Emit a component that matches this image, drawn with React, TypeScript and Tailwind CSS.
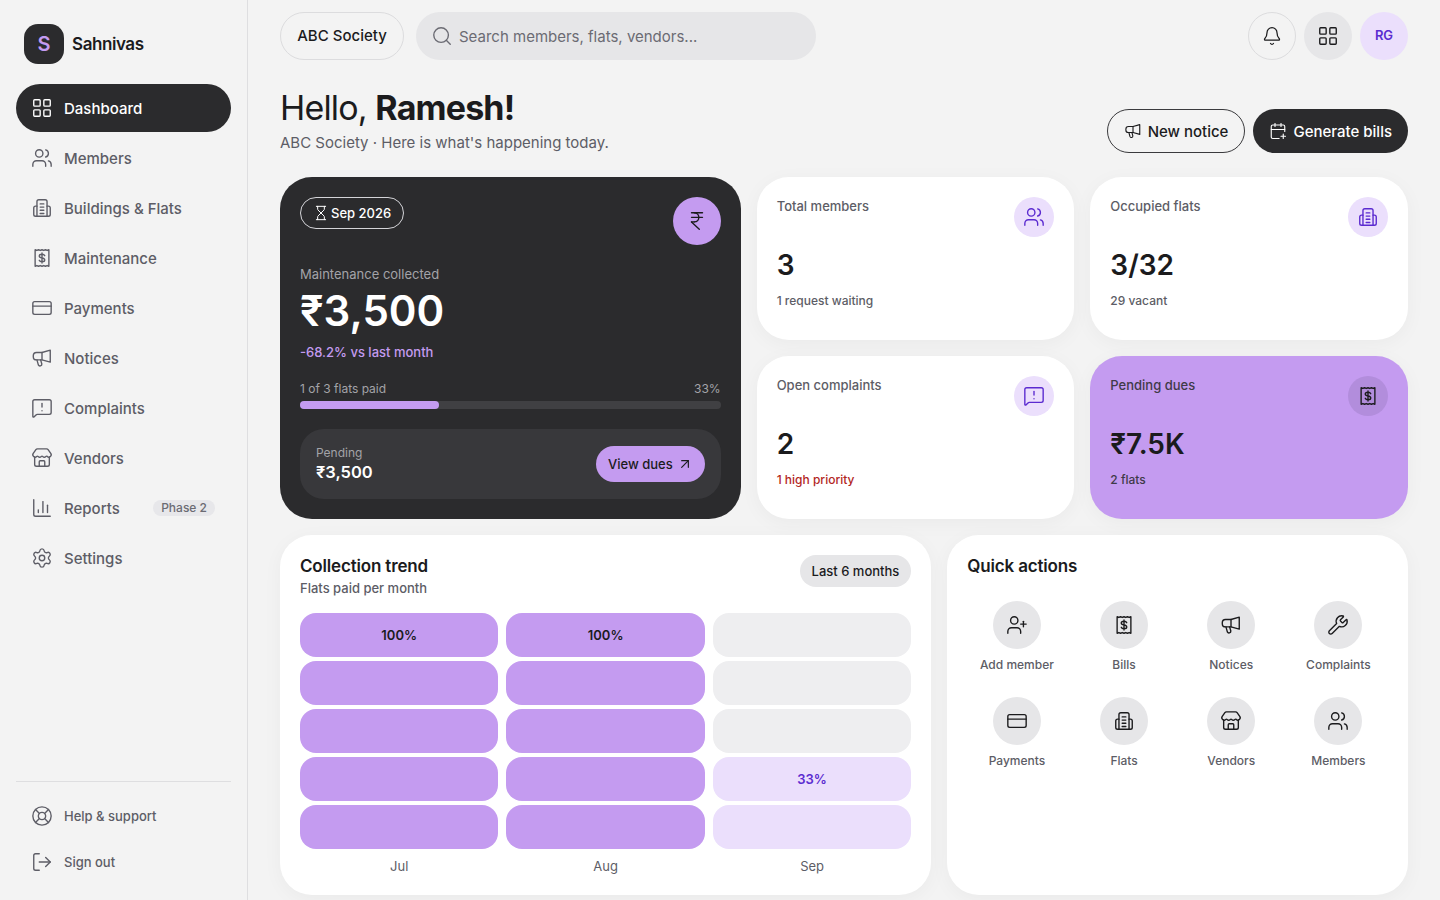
import React from "react";
import { ArrowUpRight, Bell, CalendarPlus, ChartColumn, CreditCard, Hourglass, IndianRupee, LayoutGrid, LifeBuoy, LogOut, MessageSquareWarning, Search, Settings, Store, UserPlus, Users, Wrench } from "lucide-react";

type IP = { size?: number; strokeWidth?: number; className?: string };

const Receipt = ({ size = 22, strokeWidth = 1.5, className }: IP) => (
  <svg width={size} height={size} viewBox="0 0 24 24" fill="none" stroke="currentColor" strokeWidth={strokeWidth} strokeLinecap="round" strokeLinejoin="round" className={className}>
    <path d="M4.5 3v18l1.875-.8 1.875.8 1.875-.8L12 21l1.875-.8 1.875.8 1.875-.8 1.875.8V3l-1.875.8L15.75 3l-1.875.8L12 3l-1.875.8L8.25 3l-1.875.8z" />
    <path d="M15 9.500c-.4-1-1.500-1.600-3-1.600-1.700 0-3 .8-3 2s1.100 1.800 3 2.100 3 .9 3 2.100-1.300 2-3 2c-1.500 0-2.600-.6-3-1.600M12 6.500v11" />
  </svg>
);
const Flats = ({ size = 22, strokeWidth = 1.5, className }: IP) => (
  <svg width={size} height={size} viewBox="0 0 24 24" fill="none" stroke="currentColor" strokeWidth={strokeWidth} strokeLinecap="round" strokeLinejoin="round" className={className}>
    <path d="M6.500 21V5a2 2 0 0 1 2-2h7a2 2 0 0 1 2 2v16" />
    <path d="M6.500 10H5a2 2 0 0 0-2 2v7a2 2 0 0 0 2 2h14a2 2 0 0 0 2-2v-7a2 2 0 0 0-2-2h-1.500" />
    <path d="M10 7.500h4M10 11h4M10 14.500h4M10 18h4" />
  </svg>
);
const Horn = ({ size = 22, strokeWidth = 1.5, className }: IP) => (
  <svg width={size} height={size} viewBox="0 0 24 24" fill="none" stroke="currentColor" strokeWidth={strokeWidth} strokeLinecap="round" strokeLinejoin="round" className={className}>
    <path d="M21 3.500v13L12 14H6a3.500 3.500 0 0 1-3.500-3.500V9.500A3.500 3.500 0 0 1 6 6h6z" />
    <path d="M12 6v8" />
    <path d="M6.500 14 8 19.500a2 2 0 0 0 3.800-1L10.500 14" />
  </svg>
);

const nav = [
  { label: "Members", Icon: Users },
  { label: "Buildings & Flats", Icon: Flats },
  { label: "Maintenance", Icon: Receipt },
  { label: "Payments", Icon: CreditCard },
  { label: "Notices", Icon: Horn },
  { label: "Complaints", Icon: MessageSquareWarning },
  { label: "Vendors", Icon: Store },
  { label: "Reports", Icon: ChartColumn, badge: "Phase 2" },
  { label: "Settings", Icon: Settings },
];

const quick = [
  { label: "Add member", Icon: UserPlus },
  { label: "Bills", Icon: Receipt },
  { label: "Notices", Icon: Horn },
  { label: "Complaints", Icon: Wrench },
  { label: "Payments", Icon: CreditCard },
  { label: "Flats", Icon: Flats },
  { label: "Vendors", Icon: Store },
  { label: "Members", Icon: Users },
];

function Sidebar() {
  return (
    <aside className="flex h-full w-[248px] shrink-0 flex-col border-r border-[#dedee0] px-4 pb-4 pt-6">
      <div className="flex items-center gap-2 pl-2">
        <div className="flex h-10 w-10 items-center justify-center rounded-[14px] bg-[#2b2b2d] text-xl font-semibold text-[#c49bf0]">S</div>
        <span className="pt-0.5 text-[17px] font-semibold tracking-tight text-[#1b1b1d]">Sahnivas</span>
      </div>
      <nav className="mt-5 flex flex-col gap-0.5">
        <div className="flex h-12 items-center gap-[11px] rounded-full bg-[#2b2b2d] px-[15px] text-[15px] font-medium text-white">
          <LayoutGrid size={22} strokeWidth={1.5} />
          <span className="pt-0.5">Dashboard</span>
        </div>
        {nav.map(({ label, Icon, badge }) => (
          <div key={label} className="flex h-12 items-center gap-[11px] px-[15px] text-[15px] font-medium text-[#5d5d66]">
            <Icon size={22} strokeWidth={1.5} />
            <span className="pt-0.5">{label}</span>
            {badge && <span className="ml-auto mr-px rounded-full bg-[#e7e7ea] px-2 text-xs leading-4 text-[#6b6b73]">{badge}</span>}
          </div>
        ))}
      </nav>
      <div className="mt-auto flex flex-col gap-0.5 border-t border-[#dedee0] pt-3">
        {[
          { label: "Help & support", Icon: LifeBuoy },
          { label: "Sign out", Icon: LogOut },
        ].map(({ label, Icon }) => (
          <div key={label} className="flex h-11 items-center gap-[11px] px-[15px] text-[13px] font-medium text-[#5d5d66]">
            <Icon size={22} strokeWidth={1.5} />
            <span className="pt-0.5">{label}</span>
          </div>
        ))}
      </div>
    </aside>
  );
}

function Topbar() {
  return (
    <header className="flex h-12 items-center gap-3">
      <div className="flex h-12 w-[124px] items-center justify-center rounded-full border border-[#dcdcde] text-[15px] font-medium text-[#1b1b1d]">ABC Society</div>
      <div className="flex h-12 w-[400px] items-center gap-1.5 rounded-full bg-[#e6e6e8] px-[15px] text-[15px] text-[#6b6b73]">
        <Search size={22} strokeWidth={1.5} />
        <span className="pt-0.5">Search members, flats, vendors...</span>
      </div>
      <div className="ml-auto flex items-center gap-2">
        <div className="flex h-12 w-12 items-center justify-center rounded-full border border-[#dcdcde] text-[#1b1b1d]"><Bell size={20} strokeWidth={1.5} /></div>
        <div className="flex h-12 w-12 items-center justify-center rounded-full bg-[#e6e6e8] text-[#1b1b1d]"><LayoutGrid size={22} strokeWidth={1.5} /></div>
        <div className="flex h-12 w-12 items-center justify-center rounded-full bg-[#ebdffc] text-[13px] font-semibold text-[#5b2bd0]">RG</div>
      </div>
    </header>
  );
}

function Hero() {
  return (
    <div className="col-span-5 flex h-[342px] flex-col rounded-[32px] bg-[#2b2b2d] p-5 text-white">
      <div className="flex items-start justify-between">
        <div className="flex h-8 items-center gap-[2px] rounded-full border border-[#d4d4d8] px-3 text-[13px] font-medium">
          <Hourglass size={16} strokeWidth={1.5} />
          <span className="pt-0.5">Sep 2026</span>
        </div>
        <div className="flex h-12 w-12 items-center justify-center rounded-full bg-[#c49bf0] text-[#1b1b1d]"><IndianRupee size={22} strokeWidth={1.5} /></div>
      </div>
      <div className="mt-[19px] text-[13px] leading-5 text-[#a3a3a8]">Maintenance collected</div>
      <div className="mt-[3px] text-[42px] font-semibold leading-[48px]">₹3,500</div>
      <div className="mt-[7px] text-[13px] font-medium leading-5 text-[#c49bf0]">-68.2% vs last month</div>
      <div className="mt-[17px] flex justify-between text-xs leading-5 text-[#a3a3a8]">
        <span>1 of 3 flats paid</span>
        <span>33%</span>
      </div>
      <div className="mt-[2px] h-2 rounded-full bg-[#404043]">
        <div className="h-2 w-[33%] rounded-full bg-[#c49bf0]" />
      </div>
      <div className="mt-5 flex h-[70px] items-center justify-between rounded-3xl bg-[#38383b] pl-4 pr-4">
        <div>
          <div className="text-xs leading-[17px] text-[#a3a3a8]">Pending</div>
          <div className="text-[16.5px] font-semibold leading-[23px]">₹3,500</div>
        </div>
        <div className="flex h-9 items-center gap-1 rounded-full bg-[#c49bf0] px-3 text-[13px] font-medium text-[#1b1b1d]">
          <span className="pt-0.5">View dues</span>
          <ArrowUpRight size={16} strokeWidth={1.75} />
        </div>
      </div>
    </div>
  );
}

function Stat({ label, value, sub, Icon, subClass, accent }: { label: string; value: string; sub: string; Icon: React.ComponentType<IP>; subClass?: string; accent?: boolean }) {
  return (
    <div className={accent ? "flex flex-col rounded-[32px] bg-[#c49bf0] p-5 shadow-[0_4px_20px_rgba(0,0,0,0.04)]" : "flex flex-col rounded-[32px] bg-white p-5 shadow-[0_4px_20px_rgba(0,0,0,0.04)]"}>
      <div className="flex items-start justify-between">
        <span className={accent ? "text-[13px] font-medium leading-[18px] text-[#3f3a48]" : "text-[13px] font-medium leading-[18px] text-[#5d5d66]"}>{label}</span>
        <div className={accent ? "flex h-10 w-10 items-center justify-center rounded-full bg-[#b28ddc] text-[#1b1b1d]" : "flex h-10 w-10 items-center justify-center rounded-full bg-[#ebdffc] text-[#5b2bd0]"}>
          <Icon size={22} strokeWidth={1.5} />
        </div>
      </div>
      <div className="mt-[10px] text-[28px] font-semibold leading-9 text-[#1b1b1d]">{value}</div>
      <div className={"mt-[9px] text-xs font-medium leading-[18px] " + (subClass ?? "text-[#5d5d66]")}>{sub}</div>
    </div>
  );
}

function Trend() {
  const cols = [
    { m: "Jul", cells: ["100%", "", "", "", ""], c: ["p", "p", "p", "p", "p"] },
    { m: "Aug", cells: ["100%", "", "", "", ""], c: ["p", "p", "p", "p", "p"] },
    { m: "Sep", cells: ["", "", "", "33%", ""], c: ["g", "g", "g", "l", "l"] },
  ];
  const cls: Record<string, string> = {
    p: "flex h-11 items-center justify-center rounded-2xl bg-[#c49bf0] pt-0.5 text-[13px] font-semibold text-[#1b1b1d]",
    g: "flex h-11 items-center justify-center rounded-2xl bg-[#eeeef0] pt-0.5 text-[13px] font-semibold",
    l: "flex h-11 items-center justify-center rounded-2xl bg-[#ebdffc] pt-0.5 text-[13px] font-semibold text-[#5b2bd0]",
  };
  return (
    <div className="col-span-7 flex h-[360px] flex-col rounded-[32px] bg-white p-5 shadow-[0_4px_20px_rgba(0,0,0,0.04)]">
      <div className="flex items-start justify-between">
        <div>
          <div className="text-[17px] font-semibold leading-[22px] tracking-[-0.01em] text-[#1b1b1d]">Collection trend</div>
          <div className="mt-[1px] text-[13px] font-medium leading-5 text-[#5d5d66]">Flats paid per month</div>
        </div>
        <div className="flex h-8 items-center rounded-full bg-[#e6e6e8] px-3 pt-0.5 text-[13px] font-medium text-[#1b1b1d]">Last 6 months</div>
      </div>
      <div className="mt-[15px] grid grid-cols-3 gap-x-2">
        {cols.map((col) => (
          <div key={col.m} className="flex flex-col gap-1">
            {col.cells.map((t, i) => (
              <div key={i} className={cls[col.c[i]]}>{t}</div>
            ))}
            <div className="mt-[3px] text-center text-[13px] leading-5 text-[#5d5d66]">{col.m}</div>
          </div>
        ))}
      </div>
    </div>
  );
}

function Quick() {
  return (
    <div className="col-span-5 flex h-[360px] flex-col rounded-[32px] bg-white p-5 shadow-[0_4px_20px_rgba(0,0,0,0.04)]">
      <div className="text-[17px] font-semibold leading-[22px] tracking-[-0.01em] text-[#1b1b1d]">Quick actions</div>
      <div className="mt-6 grid grid-cols-4 gap-x-2 gap-y-[23px]">
        {quick.map(({ label, Icon }) => (
          <div key={label} className="flex flex-col items-center">
            <div className="flex h-12 w-12 items-center justify-center rounded-full bg-[#e6e6e8] text-[#1b1b1d]">
              <Icon size={22} strokeWidth={1.5} />
            </div>
            <div className="mt-[7px] text-xs font-medium leading-[18px] text-[#5d5d66]">{label}</div>
          </div>
        ))}
      </div>
    </div>
  );
}

export default function App() {
  return (
    <div className="flex h-screen w-full overflow-hidden bg-[#f3f3f3] font-[Inter,sans-serif] antialiased">
      <Sidebar />
      <main className="min-w-0 flex-1 overflow-hidden px-8 pt-3">
        <Topbar />
        <div className="mt-7 flex items-end justify-between">
          <div>
            <h1 className="text-[34px] font-normal leading-10 tracking-tight text-[#1b1b1d]">Hello, <span className="font-bold">Ramesh!</span></h1>
            <p className="mt-[5px] text-[15px] leading-5 text-[#5d5d66]">ABC Society · Here is what's happening today.</p>
          </div>
          <div className="flex gap-2">
            <div className="flex h-11 items-center gap-1.5 rounded-full border border-[#3a3a3d] px-4 text-[15px] font-medium text-[#1b1b1d]">
              <Horn size={18} />
              <span className="pt-0.5">New notice</span>
            </div>
            <div className="flex h-11 items-center gap-1.5 rounded-full bg-[#2b2b2d] px-4 text-[15px] font-medium text-white">
              <CalendarPlus size={18} strokeWidth={1.5} />
              <span className="pt-0.5">Generate bills</span>
            </div>
          </div>
        </div>
        <div className="mt-6 grid grid-cols-12 gap-4">
          <Hero />
          <div className="col-span-7 grid h-[342px] grid-cols-2 grid-rows-2 gap-4">
            <Stat label="Total members" value="3" sub="1 request waiting" Icon={Users} />
            <Stat label="Occupied flats" value="3/32" sub="29 vacant" Icon={Flats} />
            <Stat label="Open complaints" value="2" sub="1 high priority" Icon={MessageSquareWarning} subClass="text-[#b3261e]" />
            <Stat label="Pending dues" value="₹7.5K" sub="2 flats" Icon={Receipt} subClass="text-[#3f3a48]" accent />
          </div>
          <Trend />
          <Quick />
        </div>
      </main>
    </div>
  );
}
